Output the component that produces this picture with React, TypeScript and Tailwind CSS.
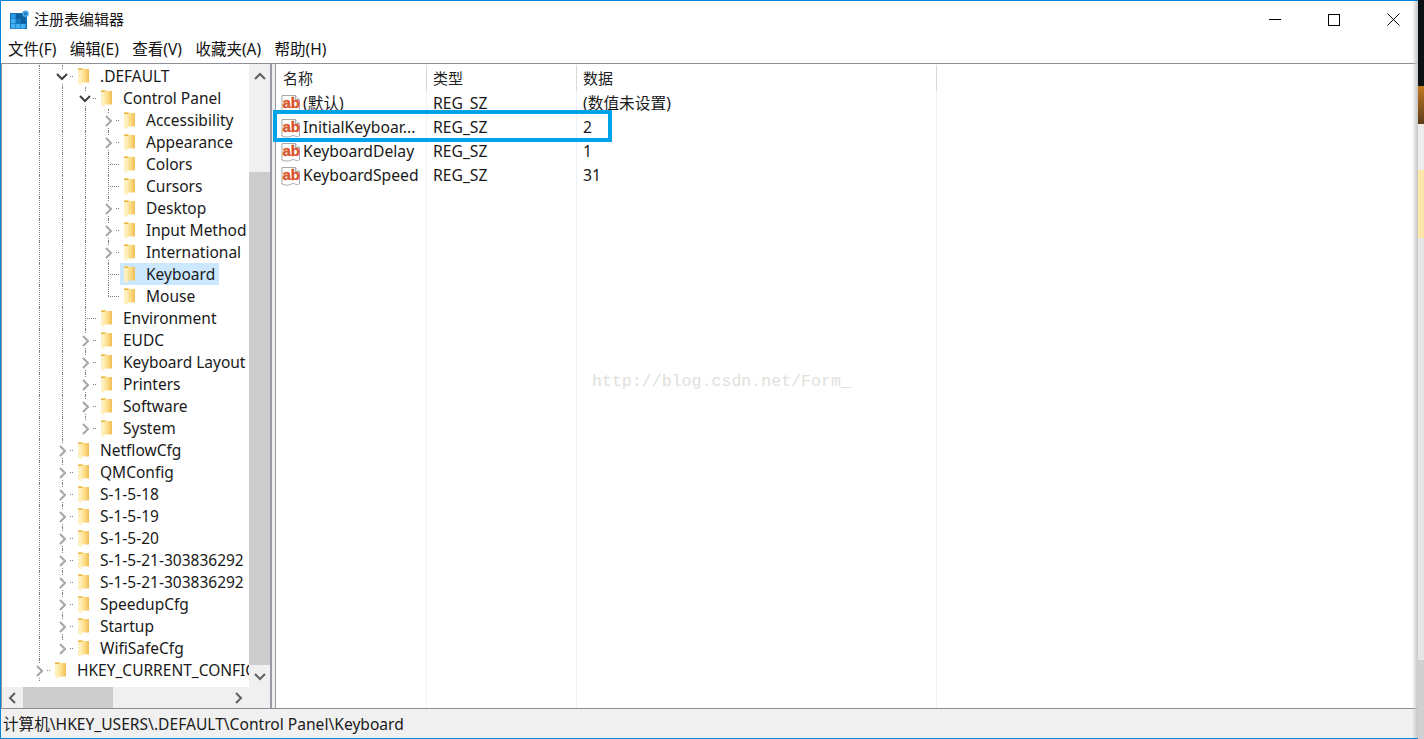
const uiFont = "font-['Noto_Sans','Noto_Sans_CJK_SC',sans-serif]"

type TreeNode = {
  label: string
  // guides: one flag per ancestor column, true when the dotted line runs on through this row
  guides: boolean[]
  toggle?: 'open' | 'closed'
  last?: boolean
  selected?: boolean
}

const tree: TreeNode[] = [
  { label: '.DEFAULT', guides: [true], toggle: 'open' },
  { label: 'Control Panel', guides: [true, true], toggle: 'open' },
  { label: 'Accessibility', guides: [true, true, true], toggle: 'closed' },
  { label: 'Appearance', guides: [true, true, true], toggle: 'closed' },
  { label: 'Colors', guides: [true, true, true] },
  { label: 'Cursors', guides: [true, true, true] },
  { label: 'Desktop', guides: [true, true, true], toggle: 'closed' },
  { label: 'Input Method', guides: [true, true, true], toggle: 'closed' },
  { label: 'International', guides: [true, true, true], toggle: 'closed' },
  { label: 'Keyboard', guides: [true, true, true], selected: true },
  { label: 'Mouse', guides: [true, true, true], last: true },
  { label: 'Environment', guides: [true, true] },
  { label: 'EUDC', guides: [true, true], toggle: 'closed' },
  { label: 'Keyboard Layout', guides: [true, true], toggle: 'closed' },
  { label: 'Printers', guides: [true, true], toggle: 'closed' },
  { label: 'Software', guides: [true, true], toggle: 'closed' },
  { label: 'System', guides: [true, true], toggle: 'closed', last: true },
  { label: 'NetflowCfg', guides: [true], toggle: 'closed' },
  { label: 'QMConfig', guides: [true], toggle: 'closed' },
  { label: 'S-1-5-18', guides: [true], toggle: 'closed' },
  { label: 'S-1-5-19', guides: [true], toggle: 'closed' },
  { label: 'S-1-5-20', guides: [true], toggle: 'closed' },
  { label: 'S-1-5-21-303836292', guides: [true], toggle: 'closed' },
  { label: 'S-1-5-21-303836292', guides: [true], toggle: 'closed' },
  { label: 'SpeedupCfg', guides: [true], toggle: 'closed' },
  { label: 'Startup', guides: [true], toggle: 'closed' },
  { label: 'WifiSafeCfg', guides: [true], toggle: 'closed', last: true },
  { label: 'HKEY_CURRENT_CONFIG', guides: [], toggle: 'closed' },
]

const values = [
  { name: '(默认)', type: 'REG_SZ', data: '(数值未设置)' },
  { name: 'InitialKeyboar...', type: 'REG_SZ', data: '2' },
  { name: 'KeyboardDelay', type: 'REG_SZ', data: '1' },
  { name: 'KeyboardSpeed', type: 'REG_SZ', data: '31' },
]

const menus = ['文件(F)', '编辑(E)', '查看(V)', '收藏夹(A)', '帮助(H)']

function RegeditLogo() {
  return (
    <svg width="20" height="20" viewBox="0 0 20 20" className="shrink-0">
      <rect x="0" y="3" width="17" height="16" fill="#0f6fb5" />
      <rect x="1" y="4" width="4.500" height="4.500" fill="#2a9be6" />
      <rect x="6" y="4" width="4.500" height="4.500" fill="#0e5f9f" />
      <rect x="11" y="4" width="4.500" height="4.500" fill="#0e5f9f" />
      <rect x="1" y="9" width="4.500" height="4.500" fill="#45b0f2" />
      <rect x="6" y="9" width="4.500" height="4.500" fill="#1478bd" />
      <rect x="11" y="9" width="4.500" height="4.500" fill="#0e5f9f" />
      <rect x="1" y="14" width="4.500" height="4.500" fill="#45b0f2" />
      <rect x="6" y="14" width="4.500" height="4.500" fill="#45b0f2" />
      <rect x="11" y="14" width="4.500" height="4.500" fill="#45b0f2" />
      <circle cx="15.500" cy="3.800" r="3.300" fill="#4aa8e6" />
      <circle cx="15.500" cy="3.800" r="1.500" fill="#1a78c2" />
    </svg>
  )
}

function Folder() {
  return (
    <svg width="13" height="19" viewBox="0 0 13 19" className="shrink-0">
      <defs>
        <linearGradient id="folderFill" x1="0" x2="1" y1="0" y2="0">
          <stop offset="0" stopColor="#fef0bd" />
          <stop offset="0.55" stopColor="#fde08c" />
          <stop offset="1" stopColor="#f0bd56" />
        </linearGradient>
      </defs>
      <path d="M1 1h5l1 1h5v13.500H1z" fill="url(#folderFill)" />
      <path d="M1 2.500l3.500 1.500v14.500L1 16z" fill="#fff0c0" />
      <path d="M1 1.500h4v1.500H1z" fill="#e8b64c" />
    </svg>
  )
}

function StringIcon() {
  return (
    <svg width="20" height="21" viewBox="0 0 20 21" className="shrink-0">
      <path d="M1 1.500h13.500l4 4V18c-3 2-5-1.500-8 0s-6 1.500-9.500 0z" fill="#fff" stroke="#a9a9a9" />
      <path d="M14.500 1.500v4h4" fill="#eee" stroke="#a9a9a9" />
      <text x="1.500" y="14" fontSize="15" fontWeight="700" fill="#d9552c" stroke="#d9552c" strokeWidth="0.400" fontFamily="'Liberation Sans',sans-serif">
        ab
      </text>
    </svg>
  )
}

function Chevron({ dir, color }: { dir: 'up' | 'down' | 'left' | 'right'; color: string }) {
  const paths = {
    up: 'M1 7l5-5 5 5',
    down: 'M1 2l5 5 5-5',
    left: 'M7 1L2 6l5 5',
    right: 'M2 1l5 5-5 5',
  }
  const wide = dir === 'up' || dir === 'down'
  return (
    <svg width={wide ? 12 : 9} height={wide ? 9 : 12} viewBox={wide ? '0 0 12 9' : '0 0 9 12'}>
      <path d={paths[dir]} fill="none" stroke={color} strokeWidth="2" />
    </svg>
  )
}

function TreeRow({ node }: { node: TreeNode }) {
  return (
    <div className="flex h-[22px] shrink-0 items-center">
      {node.guides.map((on, i) => (
        <div key={i} className="relative h-full w-[23px] shrink-0">
          {on && <div className="absolute top-0 bottom-0 left-[11px] border-l border-dotted border-[#808080]" />}
        </div>
      ))}
      <div className="relative h-full w-[23px] shrink-0">
        <div className={`absolute top-0 left-[11px] border-l border-dotted border-[#808080] ${node.last ? 'h-[11px]' : 'h-full'}`} />
        <div className="absolute top-[11px] left-[11px] w-[11px] border-t border-dotted border-[#808080]" />
        {node.toggle && (
          <div className="absolute top-[4px] left-[4px] flex h-[15px] w-[14px] items-center justify-center bg-white">
            {node.toggle === 'open' ? <Chevron dir="down" color="#404040" /> : <Chevron dir="right" color="#a6a6a6" />}
          </div>
        )}
      </div>
      <div className={`flex h-full items-center pr-1 ${node.selected ? 'bg-[#cce8ff]' : ''}`}>
        <div className="flex w-[26px] shrink-0 pl-[3px]">
          <Folder />
        </div>
        <span className="whitespace-nowrap pt-[2px] text-[15.500px] text-[#1a1a1a]">{node.label}</span>
      </div>
    </div>
  )
}

export default function App() {
  return (
    <div className={`flex h-[739px] w-[1424px] overflow-hidden bg-[#d4d4d4] ${uiFont}`}>
      <div className="relative flex w-[1418px] shrink-0 flex-col border-t border-b border-l border-[#0a84d8] bg-white">
        {/* title bar */}
        <div className="flex h-[37px] shrink-0 items-center pl-[9px]">
          <RegeditLogo />
          <span className="ml-[4px] text-[15px] text-[#111]">注册表编辑器</span>
          <div className="ml-auto flex items-center pr-[18px]">
            <div className="h-[1px] w-[12px] bg-black" />
            <div className="ml-[47px] h-[12px] w-[12px] border border-black" />
            <svg width="13" height="13" viewBox="0 0 13 13" className="ml-[47px]">
              <path d="M.5.5l12 12M12.500.5l-12 12" stroke="#000" fill="none" />
            </svg>
          </div>
        </div>

        {/* menu */}
        <div className="flex h-[25px] shrink-0 items-center gap-[13.500px] pb-[2px] pl-[7px] text-[15.500px] text-[#111]">
          {menus.map((m) => (
            <span key={m}>{m}</span>
          ))}
        </div>

        {/* main */}
        <div className="flex min-h-0 flex-1 border-t border-t-[#8f8f98] bg-[#f0f0f0]">
          {/* tree */}
          <div className="flex w-[271px] shrink-0 flex-col border-r-2 border-l border-[#9a9aa2] bg-[#f0f0f0]">
            <div className="flex min-h-0 flex-1">
              <div className="flex min-w-0 flex-1 flex-col overflow-hidden bg-white pt-[1px] pl-[26px]">
                {tree.map((n, i) => (
                  <TreeRow key={i} node={n} />
                ))}
              </div>
              <div className="flex w-[21px] shrink-0 flex-col bg-[#f0f0f0]">
                <div className="flex h-[24px] shrink-0 items-center justify-center">
                  <Chevron dir="up" color="#606060" />
                </div>
                <div className="h-[84px] shrink-0" />
                <div className="min-h-0 flex-1 bg-[#cdcdcd]" />
                <div className="flex h-[22px] shrink-0 items-center justify-center">
                  <Chevron dir="down" color="#606060" />
                </div>
              </div>
            </div>
            <div className="flex h-[21px] shrink-0 items-center bg-[#f0f0f0] pr-[21px]">
              <div className="flex w-[21px] shrink-0 justify-center">
                <Chevron dir="left" color="#606060" />
              </div>
              <div className="h-full w-[90px] bg-[#cdcdcd]" />
              <div className="ml-auto flex w-[21px] shrink-0 justify-center">
                <Chevron dir="right" color="#606060" />
              </div>
            </div>
          </div>

          <div className="w-[3px] shrink-0" />

          {/* value list */}
          <div className="relative min-w-0 flex-1 border-l border-[#9a9aa2] bg-white">
            <div className="flex h-[27px] items-center text-[15px] text-[#222]">
              <div className="h-[26px] w-[151px] border-r border-[#d9d9d9] pl-[7px] leading-[27px]">名称</div>
              <div className="h-[26px] w-[150px] border-r border-[#d9d9d9] pl-[6px] leading-[27px]">类型</div>
              <div className="h-[26px] w-[360px] border-r border-[#d9d9d9] pl-[6px] leading-[27px]">数据</div>
            </div>
            <div className="flex flex-col">
              {values.map((v) => (
                <div key={v.name} className="flex h-[24px] items-center pt-[2px] text-[15.700px] text-[#1a1a1a]">
                  <div className="flex w-[150px] items-center pl-[5px]">
                    <StringIcon />
                    <span className="whitespace-nowrap pl-[2px]">{v.name}</span>
                  </div>
                  <div className="w-[150px] pl-[7px]">{v.type}</div>
                  <div className="pl-[7px]">{v.data}</div>
                </div>
              ))}
            </div>
            {/* faint column guides */}
            <div className="absolute top-[26px] bottom-0 left-[150px] border-l border-[#eaf3fb]" />
            <div className="absolute top-[26px] bottom-0 left-[300px] border-l border-[#eaf3fb]" />
            <div className="absolute top-[26px] bottom-0 left-[660px] border-l border-[#eaf3fb]" />
            {/* annotation box */}
            <div className="absolute top-[46px] left-[-3px] h-[32px] w-[339px] border-4 border-[#00a2e8]" />
            {/* watermark */}
            <span className="absolute top-[306px] left-[316px] font-['Liberation_Mono',monospace] text-[16.600px] text-[#dfdfdb]">
              http://blog.csdn.net/Form_
            </span>
          </div>
        </div>

        {/* status bar */}
        <div className="flex h-[30px] shrink-0 items-center border-t border-[#8f8f98] bg-[#f0f0f0] pt-[2px] pl-[2px] text-[15.600px] text-[#1a1a1a]">
          计算机\HKEY_USERS\.DEFAULT\Control Panel\Keyboard
        </div>

        {/* window edge shadow */}
        <div className="pointer-events-none absolute top-0 right-0 bottom-0 w-[6px] bg-linear-to-r from-transparent to-[#c4c4c4]" />
      </div>

      {/* desktop peeking out behind the window */}
      <div className="flex w-[6px] shrink-0 flex-col">
        <div className="h-[86px] bg-[#0b1013]" />
        <div className="h-[38px] bg-linear-to-b from-[#c47a1e] to-[#5e3c1a]" />
        <div className="h-[46px] bg-[#ececec]" />
        <div className="h-[68px] bg-[#fde7a8]" />
        <div className="flex-1 bg-[#e6e6e6]" />
        <div className="h-[79px] bg-[#d0d0d0]" />
      </div>
    </div>
  )
}
